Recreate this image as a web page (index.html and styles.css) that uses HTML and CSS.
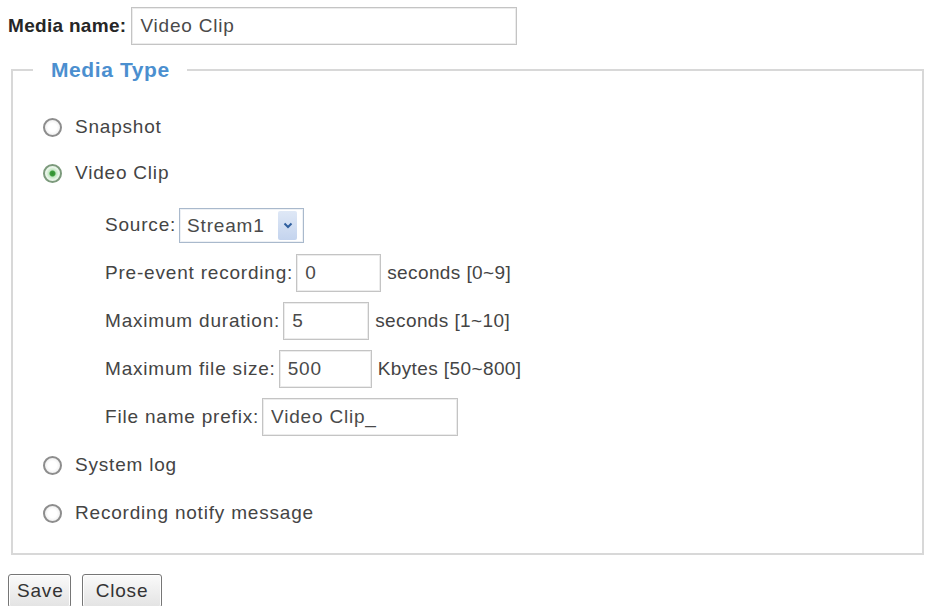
FILE: index.html
```html
<!DOCTYPE html>
<html lang="en">
<head>
    <meta charset="UTF-8">
    <meta name="viewport" content="width=device-width, initial-scale=1.0">
    <title>Media Settings</title>
    <link rel="stylesheet" href="styles.css">
</head>
<body>

<div class="page">
    <div class="name-row">
        <label class="name-label" for="mediaName">Media name:</label>
        <input type="text" id="mediaName" class="name-input" value="Video Clip">
    </div>

    <fieldset class="media-type">
        <legend>Media Type</legend>

        <div class="option">
            <input type="radio" name="mediaType" id="typeSnapshot">
            <label for="typeSnapshot">Snapshot</label>
        </div>

        <div class="option">
            <input type="radio" name="mediaType" id="typeClip" checked>
            <label for="typeClip">Video Clip</label>
        </div>

        <div class="clip-settings">
            <div class="setting">
                <label for="source">Source:</label>
                <span class="select-wrap">
                    <select id="source" class="source-select">
                        <option>Stream1</option>
                        <option>Stream2</option>
                    </select>
                    <span class="select-arrow">
                        <svg width="10" height="7" viewBox="0 0 10 7">
                            <path d="M1.5 1.5 L5 5 L8.5 1.5" fill="none" stroke="#2f5f9e" stroke-width="2"/>
                        </svg>
                    </span>
                </span>
            </div>

            <div class="setting">
                <label for="preEvent">Pre-event recording:</label>
                <input type="text" id="preEvent" class="field field-pre" value="0">
                <span class="hint">seconds [0~9]</span>
            </div>

            <div class="setting">
                <label for="maxDuration">Maximum duration:</label>
                <input type="text" id="maxDuration" class="field field-duration" value="5">
                <span class="hint">seconds [1~10]</span>
            </div>

            <div class="setting">
                <label for="maxSize">Maximum file size:</label>
                <input type="text" id="maxSize" class="field field-size" value="500">
                <span class="hint">Kbytes [50~800]</span>
            </div>

            <div class="setting">
                <label for="prefix">File name prefix:</label>
                <input type="text" id="prefix" class="field field-prefix" value="Video Clip_">
            </div>
        </div>

        <div class="option">
            <input type="radio" name="mediaType" id="typeLog">
            <label for="typeLog">System log</label>
        </div>

        <div class="option">
            <input type="radio" name="mediaType" id="typeNotify">
            <label for="typeNotify">Recording notify message</label>
        </div>
    </fieldset>

    <div class="actions">
        <button type="button" class="btn-save">Save</button>
        <button type="button" class="btn-close">Close</button>
    </div>
</div>

</body>
</html>
```

FILE: styles.css
```css
body {
    font-family: "Liberation Sans", Arial, sans-serif;
    font-size: 19px;
    letter-spacing: 0.8px;
    color: #444;
    margin: 0;
    padding: 0;
    background-color: #fff;
}

.page {
    padding: 7px 2px 0 8px;
}

input, select, button {
    font-family: inherit;
    font-size: 19px;
    letter-spacing: 0.8px;
    color: #4a4a4a;
}

.name-row {
    display: flex;
    align-items: center;
    height: 38px;
}

.name-label {
    font-weight: bold;
    letter-spacing: 0.3px;
    color: #262626;
    margin-right: 5px;
}

.name-input {
    width: 386px;
}

input[type="text"] {
    box-sizing: border-box;
    height: 38px;
    padding: 0 8px;
    border: 1px solid #c4c4c4;
    box-shadow: inset 0 0 0 1px #ececec;
    background-color: #fff;
}

.media-type {
    margin: 14px 0 0 3px;
    padding: 23px 0 16px 20px;
    border: 2px solid #d8d8d8;
}

.media-type legend {
    padding: 0 17px 0 18px;
    line-height: 22px;
    font-size: 21px;
    letter-spacing: 0.6px;
    font-weight: bold;
    color: #4b8fcf;
}

.option {
    display: flex;
    align-items: center;
    height: 46px;
    padding-left: 10px;
}

.option:nth-of-type(n+3) {
    height: 48px;
}

.option label {
    margin-left: 13px;
}

input[type="radio"] {
    appearance: none;
    box-sizing: border-box;
    width: 19px;
    height: 19px;
    margin: 0;
    border: 2px solid #8d8d8d;
    border-radius: 50%;
    background: radial-gradient(circle, #fff 40%, #e2e2e2 100%);
}

input[type="radio"]:checked {
    border-color: #7c9a7c;
    background: radial-gradient(circle, #2f8f2f 0, #3d9d3d 2.5px, #bfe6bf 3.5px, #e6f5e6 6px, #f6f6f6 9px);
}

.clip-settings {
    padding-left: 72px;
    margin-top: 5px;
}

.setting {
    display: flex;
    align-items: center;
    height: 48px;
}

.setting label {
    margin-right: 3px;
}

.field-pre {
    width: 85px;
}

.field-duration {
    width: 86px;
}

.field-size {
    width: 93px;
}

.field-prefix {
    width: 196px;
}

.hint {
    margin-left: 6px;
    letter-spacing: 0.4px;
}

.select-wrap {
    position: relative;
    display: inline-block;
}

.source-select {
    appearance: none;
    box-sizing: border-box;
    width: 125px;
    height: 35px;
    padding: 0 0 0 7px;
    border: 1px solid #a9b9cc;
    box-shadow: inset 0 0 0 1px #eef1f5;
    background-color: #fff;
    border-radius: 0;
}

.select-arrow {
    position: absolute;
    top: 3px;
    right: 7px;
    width: 19px;
    height: 29px;
    display: flex;
    align-items: center;
    justify-content: center;
    background: linear-gradient(#dfe8f6, #c4d4ee);
    border-radius: 2px;
    pointer-events: none;
}

.actions {
    display: flex;
    gap: 11px;
    margin-top: 19px;
}

.actions button {
    height: 34px;
    padding: 0 8px;
    border: 1px solid #767676;
    border-radius: 3px;
    background: linear-gradient(#fafafa, #e3e3e3);
    box-shadow: inset 0 0 0 1px #fff;
    color: #333;
    cursor: pointer;
}

.actions .btn-save {
    width: 63px;
}

.actions .btn-close {
    width: 80px;
}

.actions button:hover {
    background: linear-gradient(#f0f6fc, #d8e6f4);
}
```
